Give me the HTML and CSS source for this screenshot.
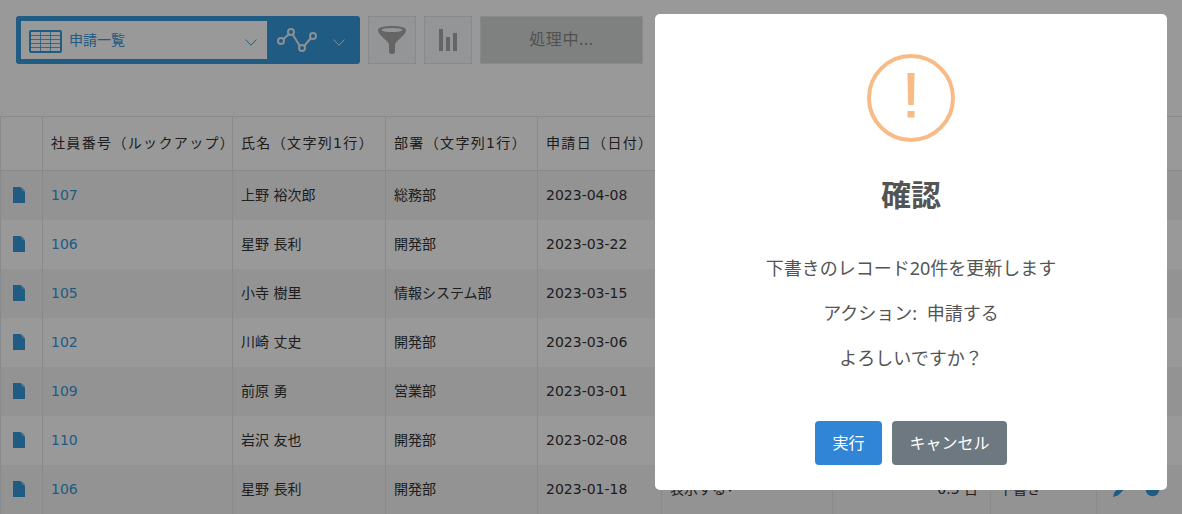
FILE: index.html
```
<!DOCTYPE html>
<html lang="ja">
<head>
    <meta charset="UTF-8">
    <meta name="viewport" content="width=device-width, initial-scale=1.0">
    <title>申請一覧</title>
    <link rel="stylesheet" href="styles.css">
</head>
<body>
    <!-- shared icons -->
    <svg class="sprite" xmlns="http://www.w3.org/2000/svg">
        <symbol id="doc" viewBox="0 0 12 16">
            <path d="M0 0h7.500l4.500 4.500V16H0z" fill="#3498db"/>
            <path d="M7.600 0.400c2.200 0 4.200 2 4.200 4c-1-.6-1.800-.6-2.600-.5c0-1.400-.4-2.600-1.600-3.500z" fill="#8fc4ea"/>
        </symbol>
        <symbol id="chevron" viewBox="0 0 12 7">
            <path d="M.4.5L6 6.200L11.600.5" fill="none" stroke="currentColor"/>
        </symbol>
    </svg>

    <div class="toolbar">
        <div class="view-select">
            <div class="view-name">
                <svg class="grid-icon" width="33" height="23" viewBox="0 0 33 23">
                    <rect x="1" y="1" width="31" height="21" rx="1" fill="none" stroke="#3498db" stroke-width="2"/>
                    <path d="M2 5.500h29M2 9.500h29M2 13.500h29M2 17.500h29M11.500 2v19M21.500 2v19" stroke="#3498db" stroke-opacity=".8"/>
                </svg>
                <span>申請一覧</span>
                <svg class="chevron"><use href="#chevron"/></svg>
            </div>
            <div class="graph-menu">
                <svg width="40" height="24" viewBox="0 0 40 24" fill="none" stroke="#e6f0f6" stroke-width="2">
                    <path d="M6.500 11L11.500 6.500M16 7L22.500 17.500M27.200 18L33.500 10.500"/>
                    <circle cx="4" cy="13" r="3"/>
                    <circle cx="14" cy="4" r="3"/>
                    <circle cx="25" cy="20" r="3"/>
                    <circle cx="36" cy="8" r="3"/>
                </svg>
                <svg class="chevron"><use href="#chevron"/></svg>
            </div>
        </div>
        <div class="tool-button">
            <svg width="28" height="28" viewBox="0 0 28 28">
                <path d="M0 4C0-1.300 28-1.300 28 4c0 3.500-4 6.500-7 9.500c-2 2-4 3.500-4 5.500v7c0 2.700-6 2.700-6 0v-7c0-2-2-3.500-4-5.500C4 10.500 0 7.500 0 4z" fill="#a9a9a9"/>
                <ellipse cx="14" cy="4" rx="10.500" ry="2.100" fill="#f7f9fa"/>
            </svg>
        </div>
        <div class="tool-button">
            <svg width="18" height="22" viewBox="0 0 18 22">
                <path d="M0 0h4v22H0zM7 8h4v14H7zM14 4h4v18h-4z" fill="#a9a9a9"/>
            </svg>
        </div>
        <div class="progress-button">処理中...</div>
    </div>

    <table class="records">
        <colgroup>
            <col class="col-icon"><col class="col-number"><col class="col-name"><col class="col-dept"><col class="col-date">
            <col class="col-link"><col class="col-days"><col class="col-status"><col class="col-action">
        </colgroup>
        <thead>
            <tr>
                <th></th><th>社員番号（ルックアップ）</th><th>氏名（文字列1行）</th><th>部署（文字列1行）</th><th>申請日（日付）</th>
                <th></th><th></th><th></th><th></th>
            </tr>
        </thead>
        <tbody>
            <tr>
                <td><svg class="doc"><use href="#doc"/></svg></td><td><a>107</a></td><td>上野 裕次郎</td><td>総務部</td><td>2023-04-08</td>
                <td></td><td></td><td></td><td></td>
            </tr>
            <tr>
                <td><svg class="doc"><use href="#doc"/></svg></td><td><a>106</a></td><td>星野 長利</td><td>開発部</td><td>2023-03-22</td>
                <td></td><td></td><td></td><td></td>
            </tr>
            <tr>
                <td><svg class="doc"><use href="#doc"/></svg></td><td><a>105</a></td><td>小寺 樹里</td><td>情報システム部</td><td>2023-03-15</td>
                <td></td><td></td><td></td><td></td>
            </tr>
            <tr>
                <td><svg class="doc"><use href="#doc"/></svg></td><td><a>102</a></td><td>川崎 丈史</td><td>開発部</td><td>2023-03-06</td>
                <td></td><td></td><td></td><td></td>
            </tr>
            <tr>
                <td><svg class="doc"><use href="#doc"/></svg></td><td><a>109</a></td><td>前原 勇</td><td>営業部</td><td>2023-03-01</td>
                <td></td><td></td><td></td><td></td>
            </tr>
            <tr>
                <td><svg class="doc"><use href="#doc"/></svg></td><td><a>110</a></td><td>岩沢 友也</td><td>開発部</td><td>2023-02-08</td>
                <td></td><td></td><td></td><td></td>
            </tr>
            <tr>
                <td><svg class="doc"><use href="#doc"/></svg></td><td><a>106</a></td><td>星野 長利</td><td>開発部</td><td>2023-01-18</td>
                <td>表示する<span class="caret"></span></td>
                <td class="days">0.5 日</td>
                <td>下書き</td>
                <td>
                    <div class="actions">
                        <svg width="16" height="16" viewBox="0 0 16 16"><path d="M0 16l1.500-5L12 .5L15.500 4L5 14.500z" fill="#3498db"/></svg>
                        <svg width="16" height="16" viewBox="0 0 16 16"><circle cx="7.500" cy="8.500" r="6.800" fill="#3498db"/></svg>
                    </div>
                </td>
            </tr>
        </tbody>
    </table>

    <div class="overlay">
        <div class="modal">
            <div class="warning-icon">
                <svg width="8" height="45" viewBox="0 0 8 45"><path d="M.4 0h7.200l-.8 32H1.200zM.5 38h7v6.500h-7z" fill="#f8bb86"/></svg>
            </div>
            <h2>確認</h2>
            <div class="message">
                <p>下書きのレコード20件を更新します</p>
                <p>アクション: 申請する</p>
                <p>よろしいですか？</p>
            </div>
            <div class="modal-buttons">
                <button class="confirm">実行</button>
                <button class="cancel">キャンセル</button>
            </div>
        </div>
    </div>
</body>
</html>
```
FILE: styles.css
```
* {
    box-sizing: border-box;
}
body {
    margin: 0;
    height: 514px;
    overflow: hidden;
    background: #fff;
    color: #333;
    font-family: "DejaVu Sans", "Noto Sans CJK JP", sans-serif;
    font-size: 14px;
}
svg {
    display: block;
}
.sprite {
    display: none;
}
.toolbar {
    display: flex;
    gap: 8px;
    height: 116px;
    padding: 16px;
}
.view-select {
    display: flex;
    width: 344px;
    height: 48px;
    padding: 5px;
    background: #3498db;
    border-radius: 3px;
}
.view-name {
    display: flex;
    align-items: center;
    width: 246px;
    height: 38px;
    padding: 0 10px 0 8px;
    background: #fff;
    color: #3498db;
}
.view-name span {
    flex: 1;
    margin-left: 7px;
    padding-bottom: 2px;
}
.grid-icon {
    margin-top: 3px;
}
.chevron {
    width: 12px;
    height: 7px;
    margin-top: 4px;
}
.graph-menu {
    display: flex;
    align-items: center;
    gap: 16px;
    padding-left: 10px;
    color: #e6f0f6;
}
.tool-button {
    display: flex;
    align-items: center;
    justify-content: center;
    width: 48px;
    height: 48px;
    background: #f7f9fa;
    border: 1px solid #e3e7e8;
}
.progress-button {
    width: 163px;
    height: 48px;
    background: #d4d7d7;
    border: 1px solid #e3e7e8;
    color: #888;
    font-family: "Noto Sans", "Noto Sans CJK JP", sans-serif;
    font-size: 16px;
    line-height: 45px;
    text-align: center;
    letter-spacing: .6px;
}
.records {
    width: 1182px;
    table-layout: fixed;
    border-collapse: separate;
    border-spacing: 0;
}
.col-icon { width: 42px; }
.col-number { width: 190px; }
.col-name { width: 153px; }
.col-dept { width: 152px; }
.col-date { width: 124px; }
.col-link { width: 171px; }
.col-days { width: 158px; }
.col-status { width: 106px; }
.col-action { width: 86px; }
.records th {
    height: 55px;
    padding: 0 0 3px 8px;
    border: 1px solid #e3e7e8;
    border-right: 0;
    font-weight: normal;
    letter-spacing: 1.35px;
    text-align: left;
    white-space: nowrap;
}
.records td {
    height: 49px;
    padding: 0 8px 2px;
    border-left: 1px solid #e3e7e8;
    line-height: 20px;
    white-space: nowrap;
}
.records td:first-child {
    padding-left: 12px;
}
.records tbody tr:nth-child(odd) {
    background: #f5f5f5;
}
.records a {
    color: #3498db;
}
.doc {
    width: 12px;
    height: 16px;
}
.caret {
    display: inline-block;
    margin-left: 1px;
    border: 3px solid transparent;
    border-top: 4px solid #333;
    border-bottom: 0;
    vertical-align: 2px;
}
.records .days {
    padding-right: 12px;
    text-align: right;
}
.actions {
    display: flex;
    gap: 16px;
    padding-left: 8px;
}
.overlay {
    position: fixed;
    inset: 0;
    padding: 14px 15px 0 655px;
    background: rgba(0, 0, 0, .4);
}
.modal {
    display: flex;
    flex-direction: column;
    align-items: center;
    width: 512px;
    height: 476px;
    padding-top: 40px;
    background: #fff;
    border-radius: 5px;
    color: #545454;
    font-family: "Noto Sans", "Noto Sans CJK JP", sans-serif;
}
.warning-icon {
    display: flex;
    align-items: center;
    justify-content: center;
    width: 88px;
    height: 88px;
    padding-bottom: 6px;
    border: 4px solid #f8bb86;
    border-radius: 50%;
}
.modal h2 {
    margin: 30px 0 0;
    font-size: 30px;
    line-height: 46px;
}
.message {
    margin-top: 37px;
    text-align: center;
    font-size: 18px;
    line-height: 27px;
    word-spacing: 5px;
}
.message p {
    margin: 0 0 18px;
}
.modal-buttons {
    display: flex;
    gap: 10px;
    margin-top: 31px;
}
.modal-buttons button {
    height: 44px;
    padding: 0 0 3px;
    border: 0;
    border-radius: 4px;
    color: #fff;
    font-family: inherit;
    font-size: 16px;
}
.confirm {
    width: 67px;
    background: #3085d6;
}
.cancel {
    width: 115px;
    background: #6e7881;
}
```
